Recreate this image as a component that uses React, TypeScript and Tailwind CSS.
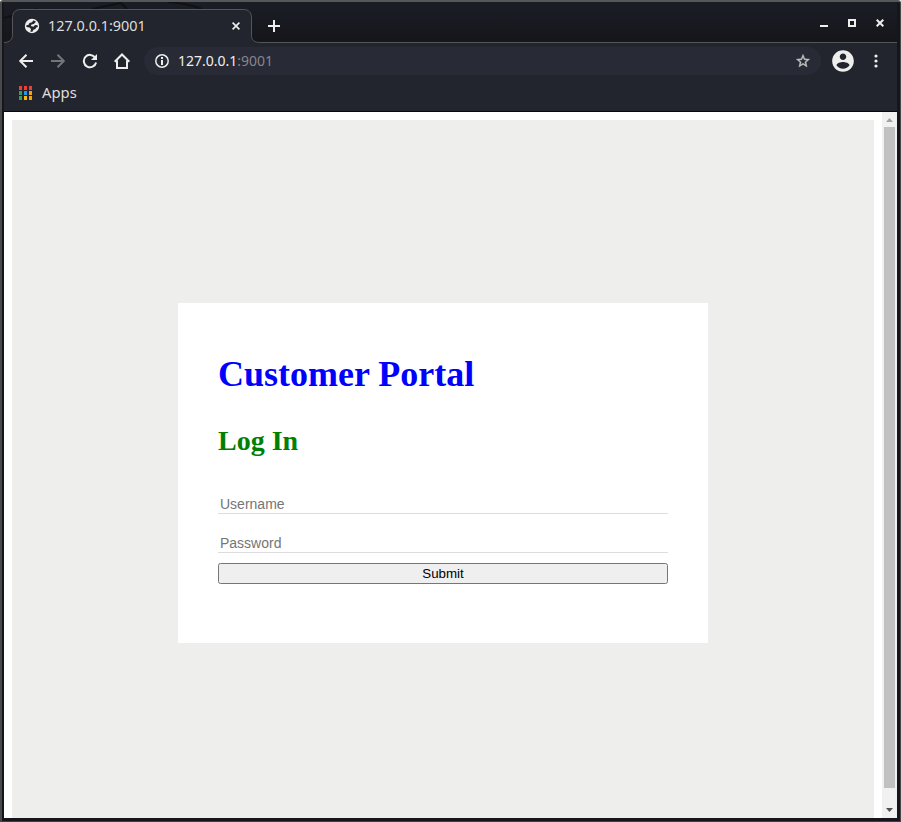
import React from "react";

const uiFont = "font-['Noto_Sans','Open_Sans',sans-serif]";
const appColors = [
  "#f63b30", "#f63b30", "#f63b30",
  "#33a05a", "#2196f3", "#f5a30f",
  "#33a05a", "#fbb80f", "#f5a30f",
];

function TabStrip() {
  return (
    <div className={`relative h-[41px] bg-gradient-to-b from-[#1b1d26] to-[#15161a] ${uiFont}`}>
      <svg className="absolute left-0 top-0" width="893" height="41" viewBox="0 0 893 41" fill="none">
        <path d="M0 16L34 7M88 7L117 1M116 0L124 8M164 0C178 1 188 3 198 7" stroke="#101116" strokeWidth="2" />
        <path d="M0 40.500C5.500 40.500 8.500 37.500 8.500 32.500V15.500C8.500 10.500 11.500 7.500 16.500 7.500H239.500C244.500 7.500 247.500 10.500 247.500 15.500V33.500C247.500 38 250.500 40.500 255.500 40.500H893V41H0Z" fill="#23252e" />
        <path d="M0 40.500C5.500 40.500 8.500 37.500 8.500 32.500V15.500C8.500 10.500 11.500 7.500 16.500 7.500H239.500C244.500 7.500 247.500 10.500 247.500 15.500V33.500C247.500 38 250.500 40.500 255.500 40.500H893" stroke="#54565a" />
      </svg>
      <div className="relative flex h-[41px] items-start">
        <div className="flex w-[248px] items-center pl-5 pt-[16px]">
          <svg width="16" height="16" viewBox="0 0 16 16">
            <circle cx="8" cy="8" r="7.200" fill="#eeeeec" />
            <path d="M9.500 2.300L8 4.200 5.500 4.900 4.600 6.800 2.200 7.500 2.500 9 5.500 9.400 7 11l-.6 2.700 2 .1 1-2L11.500 11l.7-1.600 1.600-.5-.2-1.600-2.600-.4L9.500 8.700 6.800 7.900l.7-1.400 2.300-.4L12 3.700z" fill="#23252e" />
          </svg>
          <span className="ml-2 w-[98px] whitespace-nowrap text-[14.400px] leading-4 text-[#dededc]">127.0.0.1:9001</span>
          <svg className="ml-[86px]" width="8" height="8" viewBox="0 0 8 8">
            <path d="M.6.6l6.800 6.800M7.400.6L.6 7.400" stroke="#eeeeec" strokeWidth="1.700" />
          </svg>
        </div>
        <svg className="ml-4 mt-[18px]" width="12" height="12" viewBox="0 0 12 12"><path d="M6 0v12M0 6h12" stroke="#eeeeec" strokeWidth="2" /></svg>
        <div className="ml-auto mr-[13px] mt-[17px] flex gap-5">
          <svg width="8" height="8"><path d="M0 9h8" stroke="#eeeeec" strokeWidth="2" transform="translate(0 -2)" /></svg>
          <svg width="8" height="8"><path d="M1 1h6v6H1z" fill="none" stroke="#eeeeec" strokeWidth="2" /></svg>
          <svg width="8" height="8"><path d="M.7.7l6.600 6.600M7.300.7L.7 7.300" stroke="#eeeeec" strokeWidth="2" /></svg>
        </div>
      </div>
    </div>
  );
}

function Toolbar() {
  return (
    <div className={`flex h-9 items-center bg-[#23252e] pl-[14px] text-[#eeeeec] ${uiFont}`}>
      <svg width="16" height="16" viewBox="0 0 16 16" fill="none" stroke="#eeeeec" strokeWidth="2"><path d="M15 8H2.500M8.500 1.700L2.200 8l6.300 6.300" /></svg>
      <svg className="ml-4" width="16" height="16" viewBox="0 0 16 16" fill="none" stroke="#74757a" strokeWidth="2"><path d="M1 8h12.500M7.500 1.700L13.800 8l-6.300 6.300" /></svg>
      <svg className="ml-4" width="16" height="16" viewBox="0 0 16 16">
        <path d="M13.200 4.600A6.200 6.200 0 1 0 14.100 9.500" fill="none" stroke="#eeeeec" strokeWidth="2" />
        <path d="M15 1v6H9z" fill="#eeeeec" />
      </svg>
      <svg className="ml-4" width="16" height="16" viewBox="0 0 16 16" fill="none" stroke="#eeeeec" strokeWidth="2"><path d="M.7 8.800L8 1.500l7.300 7.300M3 7.500V15h10V7.500" /></svg>
      <div className="ml-[14px] flex h-7 w-[677px] items-center rounded-full bg-[#282a35] pl-[11px] pr-[10px]">
        <svg width="14" height="14" viewBox="0 0 14 14"><circle cx="7" cy="7" r="6.200" fill="none" stroke="#eeeeec" strokeWidth="1.500" /><path d="M6 3h2v2H6zM6 6h2v5H6z" fill="#eeeeec" /></svg>
        <span className="ml-[9px] text-[14px] leading-4 text-[#eeeeec]">127.0.0.1<span className="text-[#85868c]">:9001</span></span>
        <svg className="ml-auto" width="16" height="16" viewBox="0 0 24 24"><path d="M22 9.240l-7.190-.62L12 2 9.190 8.630 2 9.240l5.460 4.730L5.820 21 12 17.270 18.180 21l-1.630-7.030L22 9.240zM12 15.400l-3.760 2.270 1-4.280-3.320-2.880 4.380-.38L12 6.100l1.710 4.040 4.380.38-3.320 2.880 1 4.280L12 15.400z" fill="#c4c4c4" stroke="#c4c4c4" strokeWidth=".6" /></svg>
      </div>
      <svg className="ml-[9px]" width="26" height="26" viewBox="0 0 24 24"><path d="M12 2C6.480 2 2 6.480 2 12s4.480 10 10 10 10-4.480 10-10S17.520 2 12 2zm0 3c1.660 0 3 1.340 3 3s-1.340 3-3 3-3-1.340-3-3 1.340-3 3-3zm0 14.200c-2.500 0-4.710-1.280-6-3.220.03-1.990 4-3.080 6-3.080 1.990 0 5.970 1.090 6 3.080-1.290 1.940-3.500 3.220-6 3.220z" fill="#eeeeec" /></svg>
      <svg className="ml-[17.500px]" width="4" height="14" viewBox="0 0 4 14" fill="#eeeeec"><circle cx="2" cy="2" r="1.600" /><circle cx="2" cy="7" r="1.600" /><circle cx="2" cy="12" r="1.600" /></svg>
    </div>
  );
}

function Bookmarks() {
  return (
    <div className={`flex h-[33px] items-start border-b border-[#08090c] bg-[#23252e] pl-[15px] ${uiFont}`}>
      <div className="mt-[7px] grid grid-cols-3 gap-x-[2px] gap-y-[1px]">
        {appColors.map((color, i) => (
          <div key={i} className="h-1 w-[3px]" style={{ backgroundColor: color }} />
        ))}
      </div>
      <span className="ml-[10px] mt-[5px] text-[14.800px] leading-4 text-[#dededc]">Apps</span>
    </div>
  );
}

function LoginForm() {
  return (
    <form className="h-[340px] w-[530px] bg-white px-10 font-['Liberation_Serif',serif]" onSubmit={(e) => e.preventDefault()}>
      <h1 className="mt-[50px] text-[36px] font-bold leading-[42px] text-[#0000ff]">Customer Portal</h1>
      <h2 className="mt-[30px] text-[28px] font-bold leading-8 text-[#008000]">Log In</h2>
      <div className="mt-[37px] font-['Liberation_Sans',sans-serif]">
        <input className="block h-5 w-full rounded-none border-b border-[#dddddd] px-[2px] pt-[2px] text-[14px] text-black outline-none placeholder:text-[#757575]" placeholder="Username" />
        <input className="mt-[19px] block h-5 w-full rounded-none border-b border-[#dddddd] px-[2px] pt-[2px] text-[14px] text-black outline-none placeholder:text-[#757575]" type="password" placeholder="Password" />
        <button className="mt-[10px] flex h-[21px] w-full items-center justify-center rounded-[2.500px] border border-[#767676] bg-[#efefef] text-[13.333px] leading-[15px] text-black">Submit</button>
      </div>
    </form>
  );
}

function Scrollbar() {
  return (
    <div className="flex w-[15px] flex-col items-center bg-[#f1f1f1]">
      <svg width="15" height="15"><path d="M4 10l3.500-4 3.500 4z" fill="#a3a3a3" /></svg>
      <div className="h-[661px] w-[11px] bg-[#c1c1c1]" />
      <svg className="mt-auto" width="15" height="15"><path d="M4 5l3.500 4L11 5z" fill="#505050" /></svg>
    </div>
  );
}

export default function App() {
  return (
    <div className="h-[822px] w-[901px] overflow-hidden rounded-t-[3px] border-b border-l-2 border-r border-t-2 border-b-[#3d3f42] border-l-[#48494b] border-r-[#48494b] border-t-[#555759] bg-[#15161b] pb-[3px] pl-[2px] pr-[3px]">
      <div className="w-[893px]">
        <TabStrip />
        <Toolbar />
        <Bookmarks />
        <div className="flex h-[706px] bg-white">
          <main className="ml-2 mr-2 mt-2 flex w-[862px] justify-center bg-[#eeeeec] pt-[183px]">
            <LoginForm />
          </main>
          <Scrollbar />
        </div>
      </div>
    </div>
  );
}
